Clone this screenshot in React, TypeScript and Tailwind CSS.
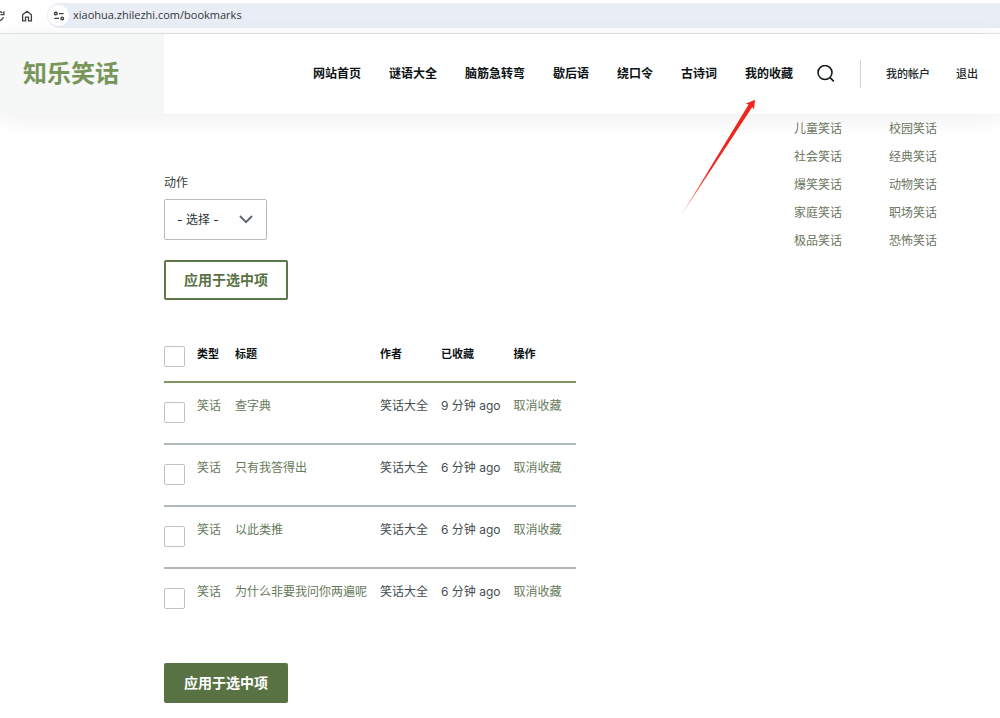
import { useState } from 'react';

const navItems = ['网站首页', '谜语大全', '脑筋急转弯', '歇后语', '绕口令', '古诗词'];

const categories = [
  ['儿童笑话', '校园笑话'],
  ['社会笑话', '经典笑话'],
  ['爆笑笑话', '动物笑话'],
  ['家庭笑话', '职场笑话'],
  ['极品笑话', '恐怖笑话'],
];

type Bookmark = {
  id: number;
  type: string;
  title: string;
  author: string;
  saved: string;
};

const bookmarks: Bookmark[] = [
  { id: 1, type: '笑话', title: '查字典', author: '笑话大全', saved: '9 分钟 ago' },
  { id: 2, type: '笑话', title: '只有我答得出', author: '笑话大全', saved: '6 分钟 ago' },
  { id: 3, type: '笑话', title: '以此类推', author: '笑话大全', saved: '6 分钟 ago' },
  { id: 4, type: '笑话', title: '为什么非要我问你两遍呢', author: '笑话大全', saved: '6 分钟 ago' },
];

const checkboxClass =
  'block size-[21px] appearance-none rounded-[2px] border border-[#bcc2c6] bg-white checked:bg-[#587244]';

function AddressBar() {
  return (
    <div className="flex h-[34px] items-start overflow-hidden border-b border-[#dfe3ec] bg-white pt-[3px]">
      <button type="button" aria-label="Reload" className="flex h-[25px] w-[5px] items-center justify-end overflow-hidden">
        <svg width="12" height="12" viewBox="0 0 12 12" className="shrink-0" fill="none" stroke="#3c4043" strokeWidth="1.3">
          <path d="M10.4 7.2A4.5 4.5 0 1 1 9.4 3" />
          <path d="M10.9 1.2V4.6H7.5" />
        </svg>
      </button>
      <button type="button" aria-label="Home" className="ml-4 flex h-[25px] w-3 items-center justify-center">
        <svg width="12" height="12" viewBox="0 0 12 12" className="shrink-0" fill="none" stroke="#3c4043" strokeWidth="1.3">
          <path d="M1.6 4.8 6 1.3l4.4 3.5v6H7.5V7.2h-3v3.6H1.6z" />
        </svg>
      </button>
      <div className="ml-[14px] flex h-[25px] flex-1 items-center rounded-l-full bg-[#e9edf6] pl-px">
        <button type="button" aria-label="Site information" className="flex size-[21px] items-center justify-center rounded-full bg-white">
          <svg width="12" height="12" viewBox="0 0 12 12" fill="none" stroke="#3c4043" strokeWidth="1.4">
            <circle cx="2.8" cy="3.6" r="1.3" />
            <path d="M6 3.6h4.6M1.4 8.4H6" />
            <circle cx="9.2" cy="8.4" r="1.3" />
          </svg>
        </button>
        <input
          type="text"
          aria-label="Address"
          defaultValue="xiaohua.zhilezhi.com/bookmarks"
          className="ml-1 min-w-0 flex-1 bg-transparent font-['Open_Sans',sans-serif] text-[11px] text-[#33363b] outline-none"
        />
      </div>
    </div>
  );
}

function Header() {
  return (
    <header className="relative flex h-20 items-stretch bg-white shadow-[0_4px_24px_rgba(0,0,0,0.07)]">
      <a href="#home" className="flex w-[164px] shrink-0 items-center bg-[#f6f8f8] pl-[23px] text-2xl font-bold text-[#78965a]">
        知乐笑话
      </a>
      <nav className="ml-auto flex items-center gap-7 text-xs font-bold whitespace-nowrap text-[#0d1214]">
        {navItems.map((item) => (
          <a key={item} href={`#${item}`}>
            {item}
          </a>
        ))}
        <div className="relative">
          <a href="#bookmarks">我的收藏</a>
          {/* Pointer to the bookmarks entry */}
          <svg
            width="76"
            height="118"
            viewBox="0 0 76 118"
            className="pointer-events-none absolute top-[33px] right-[37px] z-10"
          >
            <defs>
              <linearGradient id="pointer" x1="0" y1="1" x2="0.3" y2="0.5">
                <stop offset="0" stopColor="#f0251c" stopOpacity="0.4" />
                <stop offset="1" stopColor="#f0251c" />
              </linearGradient>
            </defs>
            <path d="M0.8 117 68.6 5.6 65.7 4.8 75 0.8 74 10.4 72.3 8 Z" fill="url(#pointer)" />
          </svg>
        </div>
      </nav>
      <button type="button" aria-label="搜索" className="ml-6 flex w-[18px] items-center">
        <svg width="18" height="18" viewBox="0 0 18 18" fill="none" stroke="#0d1214" strokeWidth="1.5">
          <circle cx="8" cy="7.6" r="7" />
          <path d="m13 12.6 3.8 3.8" />
        </svg>
      </button>
      <div className="ml-[25px] flex items-center">
        <div className="h-7 w-px bg-[#d0d5d8]" />
        <div className="flex gap-[26px] pr-[22px] pl-[25px] text-[11px] font-medium whitespace-nowrap text-[#20272b]">
          <a href="#account">我的帐户</a>
          <a href="#logout">退出</a>
        </div>
      </div>
    </header>
  );
}

function BookmarkTable() {
  const [selected, setSelected] = useState<number[]>([]);

  const toggle = (id: number) => {
    setSelected((prev) => (prev.includes(id) ? prev.filter((x) => x !== id) : [...prev, id]));
  };

  const allSelected = selected.length === bookmarks.length;

  return (
    <table className="mt-[38px] border-collapse text-left text-xs whitespace-nowrap text-[#454d52]">
      <thead>
        <tr className="h-[44px] border-b-2 border-[#7d9660] align-top text-[11px] leading-5 text-[#0d1214]">
          <th className="pt-2 pr-3">
            <input
              type="checkbox"
              aria-label="全选"
              checked={allSelected}
              onChange={() => setSelected(allSelected ? [] : bookmarks.map((b) => b.id))}
              className={checkboxClass}
            />
          </th>
          <th className="pt-[6px] pr-[14px]">类型</th>
          <th className="pt-[6px] pr-[13px]">标题</th>
          <th className="pt-[6px] pr-[13px]">作者</th>
          <th className="pt-[6px] pr-[13px]">已收藏</th>
          <th className="pt-[6px] pr-[14px]">操作</th>
        </tr>
      </thead>
      <tbody>
        {bookmarks.map((b) => (
          <tr key={b.id} className="h-[62px] border-b-2 border-[#b0b7bb] align-top leading-5 last:border-b-0">
            <td className="pt-[19px] pr-3">
              <input
                type="checkbox"
                aria-label={b.title}
                checked={selected.includes(b.id)}
                onChange={() => toggle(b.id)}
                className={checkboxClass}
              />
            </td>
            <td className="pt-[13px] pr-[14px]">
              <a href="#type" className="text-[#66795a]">
                {b.type}
              </a>
            </td>
            <td className="pt-[13px] pr-[13px]">
              <a href={`#joke-${b.id}`} className="text-[#66795a]">
                {b.title}
              </a>
            </td>
            <td className="pt-[13px] pr-[13px]">{b.author}</td>
            <td className="pt-[13px] pr-[13px]">{b.saved}</td>
            <td className="pt-[13px] pr-[14px]">
              <a href={`#remove-${b.id}`} className="text-[#66795a]">
                取消收藏
              </a>
            </td>
          </tr>
        ))}
      </tbody>
    </table>
  );
}

function Sidebar() {
  return (
    <aside className="relative ml-auto pt-px pr-[63px]">
      <ul className="grid grid-cols-[48px_48px] gap-x-[47px] text-xs leading-7 whitespace-nowrap text-[#6b7661]">
        {categories.flat().map((name) => (
          <li key={name}>
            <a href={`#${name}`}>{name}</a>
          </li>
        ))}
      </ul>
    </aside>
  );
}

export default function App() {
  return (
    <div className="min-h-screen bg-white font-['Inter','Noto_Sans_CJK_SC',sans-serif]">
      <AddressBar />
      <Header />
      <main className="flex items-start pl-[164px]">
        <form className="pt-[59px] pb-4" onSubmit={(e) => e.preventDefault()}>
          <label htmlFor="action" className="block text-xs leading-5 text-[#343b40]">
            动作
          </label>
          <div className="relative mt-[6px] w-[103px]">
            <select
              id="action"
              className="h-[41px] w-full appearance-none rounded-[2px] border border-[#b4bbc0] bg-white pl-3 text-xs text-[#2b3236]"
            >
              <option>- 选择 -</option>
              <option>取消收藏</option>
            </select>
            <svg
              width="14"
              height="9"
              viewBox="0 0 14 9"
              className="pointer-events-none absolute top-4 right-[14px]"
              fill="none"
              stroke="#59636a"
              strokeWidth="1.8"
            >
              <path d="m1 1 6 6.2L13 1" />
            </svg>
          </div>
          <button
            type="submit"
            className="mt-5 block h-10 w-[124px] rounded-[2px] border-2 border-[#5d7748] bg-white text-sm font-bold text-[#587244]"
          >
            应用于选中项
          </button>
          <BookmarkTable />
          <button type="submit" className="mt-[33px] block h-10 w-[124px] rounded-[2px] bg-[#587244] text-sm font-bold text-white">
            应用于选中项
          </button>
        </form>
        <Sidebar />
      </main>
    </div>
  );
}
